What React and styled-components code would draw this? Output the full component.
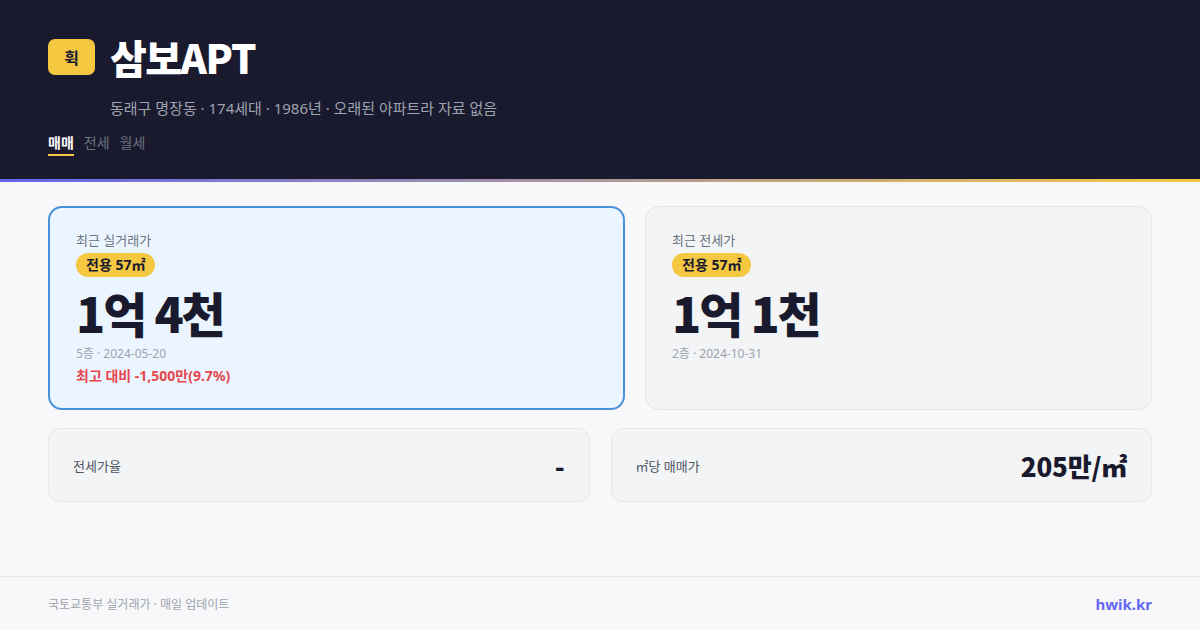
import React from "react";
import styled, { createGlobalStyle } from "styled-components";

const GlobalStyle = createGlobalStyle`
  * { box-sizing: border-box; }
  html, body { margin: 0; padding: 0; }
  body {
    width: 1200px;
    height: 630px;
    overflow: hidden;
    background: #f8f8fa;
    font-family: "Noto Sans", "Noto Sans CJK KR", sans-serif;
    color: #1a1a2e;
  }
`;

const Page = styled.div`
  display: flex;
  flex-direction: column;
  height: 630px;
`;

const Header = styled.header`
  background: #1a1a2e;
  padding: 33px 48px 0;
  height: 182px;
  border-bottom: 3px solid transparent;
  border-image: linear-gradient(90deg, #6366f1, #f5c842) 1;
`;

const TitleRow = styled.div`
  display: flex;
  align-items: center;
  gap: 15px;
`;

const Logo = styled.div`
  width: 47px;
  height: 36px;
  border-radius: 7px;
  background: #f5c842;
  color: #1a1a2e;
  display: flex;
  align-items: center;
  justify-content: center;
  font-size: 16px;
  font-weight: 700;
`;

const Title = styled.h1`
  margin: 0;
  color: #ffffff;
  font-size: 40px;
  line-height: 48px;
  font-weight: 800;
  letter-spacing: -1.5px;
  font-family: "Noto Sans CJK KR", sans-serif;
`;

const Sub = styled.p`
  margin: 16px 0 0 62px;
  font-size: 15px;
  line-height: 22px;
  color: #9ca3af;
`;

const Tabs = styled.nav`
  display: flex;
  gap: 10px;
  margin-top: 14px;
`;

const Tab = styled.span`
  font-size: 14px;
  line-height: 20px;
  padding-bottom: 1px;
  font-weight: ${(p) => (p.$active ? 700 : 400)};
  color: ${(p) => (p.$active ? "#ffffff" : "#6b7280")};
  border-bottom: 2px solid ${(p) => (p.$active ? "#f5c842" : "transparent")};
`;

const Main = styled.main`
  flex: 1;
  padding: 24px 48px 0;
  display: flex;
  flex-direction: column;
  gap: 18px;
`;

const TopGrid = styled.div`
  display: grid;
  grid-template-columns: 577fr 507fr;
  gap: 20px;
`;

const PriceCard = styled.section`
  height: 204px;
  border-radius: 14px;
  padding: ${(p) => (p.$hl ? "22px 26px" : "23px 26px")};
  background: ${(p) => (p.$hl ? "#ebf5ff" : "#f3f4f6")};
  border: ${(p) => (p.$hl ? "2px solid #4a90d9" : "1px solid #e5e7eb")};
`;

const Label = styled.div`
  font-size: 13px;
  line-height: 20px;
  color: #6b7280;
`;

const BadgeRow = styled.div`
  margin-top: 3px;
  height: 24px;
`;

const Badge = styled.span`
  display: inline-block;
  padding: 0 10px;
  height: 24px;
  line-height: 24px;
  border-radius: 12px;
  background: #f5c842;
  color: #1a1a2e;
  font-size: 14px;
  font-weight: 700;
  vertical-align: top;
`;

const Price = styled.div`
  font-family: "Noto Sans CJK KR", sans-serif;
  font-size: 48px;
  line-height: 56px;
  font-weight: 800;
  letter-spacing: -2px;
  color: #1a1a2e;
  margin-top: 7px;
`;

const Meta = styled.div`
  margin-top: 5px;
  font-size: 12px;
  line-height: 18px;
  color: #9ca3af;
`;

const Diff = styled.div`
  margin-top: 3px;
  font-size: 14px;
  line-height: 20px;
  font-weight: 700;
  color: #e5484d;
`;

const BottomGrid = styled.div`
  display: grid;
  grid-template-columns: 1fr 1fr;
  gap: 21px;
`;

const StatCard = styled.div`
  height: 74px;
  border-radius: 12px;
  background: #f3f4f6;
  border: 1px solid #e5e7eb;
  padding: 0 24px;
  display: flex;
  align-items: center;
  justify-content: space-between;
`;

const StatLabel = styled.span`
  font-size: 13px;
  color: #4b5563;
`;

const StatValue = styled.span`
  font-family: "Noto Sans CJK KR", sans-serif;
  font-size: 26px;
  font-weight: 800;
  letter-spacing: -0.2px;
  color: #1a1a2e;
`;

const Footer = styled.footer`
  height: 54px;
  border-top: 1px solid #e5e7eb;
  padding: 0 48px;
  display: flex;
  align-items: center;
  justify-content: space-between;
`;

const FootNote = styled.span`
  font-size: 12px;
  color: #9ca3af;
`;

const Brand = styled.span`
  font-size: 15px;
  font-weight: 700;
  color: #6366f1;
`;

export default function App() {
  return (
    <>
      <GlobalStyle />
      <Page>
        <Header>
          <TitleRow>
            <Logo>휙</Logo>
            <Title>삼보APT</Title>
          </TitleRow>
          <Sub>동래구 명장동 · 174세대 · 1986년 · 오래된 아파트라 자료 없음</Sub>
          <Tabs>
            <Tab $active>매매</Tab>
            <Tab>전세</Tab>
            <Tab>월세</Tab>
          </Tabs>
        </Header>
        <Main>
          <TopGrid>
            <PriceCard $hl>
              <Label>최근 실거래가</Label>
              <BadgeRow>
                <Badge>전용 57㎡</Badge>
              </BadgeRow>
              <Price>1억 4천</Price>
              <Meta>5층 · 2024-05-20</Meta>
              <Diff>최고 대비 -1,500만(9.7%)</Diff>
            </PriceCard>
            <PriceCard>
              <Label>최근 전세가</Label>
              <BadgeRow>
                <Badge>전용 57㎡</Badge>
              </BadgeRow>
              <Price>1억 1천</Price>
              <Meta>2층 · 2024-10-31</Meta>
            </PriceCard>
          </TopGrid>
          <BottomGrid>
            <StatCard>
              <StatLabel>전세가율</StatLabel>
              <StatValue>-</StatValue>
            </StatCard>
            <StatCard>
              <StatLabel>㎡당 매매가</StatLabel>
              <StatValue>205만/㎡</StatValue>
            </StatCard>
          </BottomGrid>
        </Main>
        <Footer>
          <FootNote>국토교통부 실거래가 · 매일 업데이트</FootNote>
          <Brand>hwik.kr</Brand>
        </Footer>
      </Page>
    </>
  );
}
